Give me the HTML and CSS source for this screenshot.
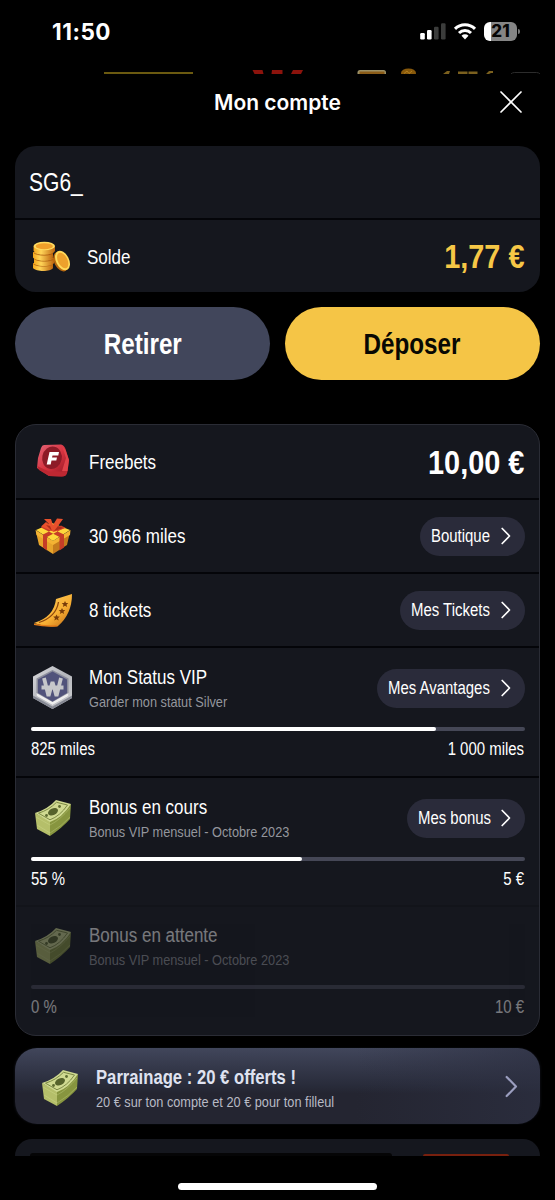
FILE: index.html
```html
<!DOCTYPE html>
<html lang="fr">
<head>
<meta charset="utf-8">
<title>Mon compte</title>
<link rel="stylesheet" href="styles.css">
</head>
<body>
<svg class="defs" width="0" height="0" aria-hidden="true">
  <defs>
    <linearGradient id="gold" x1="0" y1="0" x2="1" y2="0"><stop offset="0" stop-color="#f6a81c"/><stop offset=".35" stop-color="#ffd458"/><stop offset="1" stop-color="#bd650f"/></linearGradient>
    <linearGradient id="ticket" x1="0" y1="0" x2="1" y2="1"><stop offset="0" stop-color="#ffd567"/><stop offset=".6" stop-color="#f8b034"/><stop offset="1" stop-color="#bc6614"/></linearGradient>
    <linearGradient id="silver" x1="0" y1="0" x2="1" y2="1"><stop offset="0" stop-color="#d9d9dc"/><stop offset=".5" stop-color="#b4b6bc"/><stop offset="1" stop-color="#d0d0d3"/></linearGradient>
    <linearGradient id="red" x1="0" y1="0" x2="1" y2="1"><stop offset="0" stop-color="#e26678"/><stop offset=".5" stop-color="#d83340"/><stop offset="1" stop-color="#8d1420"/></linearGradient>
  </defs>
  <symbol id="cash" viewBox="0 0 36 36">
    <path d="M0 13 15 21 15 36 2 29Z" fill="#b5bf6a"/>
    <path d="M15 21Q24 17 36 4L35 19Q27 28 15 36Z" fill="#87953f"/>
    <path d="M0 13Q13 9 21 0L36 4Q27 18 15 22Z" fill="#d0da91"/>
    <path d="M3.5 13.2Q14 10 21.5 2.3L32.5 5Q25 16 15 19.8Z" fill="none" stroke="#7d8a45" stroke-width="1"/>
    <ellipse cx="18" cy="11.7" rx="5.3" ry="3.3" transform="rotate(-25 18 11.7)" fill="#56632b"/>
    <circle cx="24.5" cy="6.5" r="1.4" fill="#5f6d31"/><circle cx="11.5" cy="15.5" r="1.4" fill="#5f6d31"/>
    <path d="M1 17 15 25Q25 20 35 8M2 25 15 33Q27 26 35 17" fill="none" stroke="#e0e9a0" stroke-opacity=".35" stroke-width=".8"/>
  </symbol>
  <symbol id="chevron" viewBox="0 0 10 18"><path d="M1.2 1.5 8.5 9 1.2 16.5" fill="none" stroke="currentColor" stroke-width="1.700" stroke-linecap="round" stroke-linejoin="round"/></symbol>
</svg>

<header class="status">
  <span class="clock">11:50</span>
  <svg class="status-icons" width="68" height="22" viewBox="416 21 68 22">
    <g fill="#fff"><rect x="420.200" y="33" width="4.600" height="6.500" rx="1.200"/><rect x="427" y="30" width="4.600" height="9.500" rx="1.200"/></g>
    <g fill="#3b3c3b"><rect x="434" y="26.700" width="4.600" height="12.800" rx="1.200"/><rect x="441" y="23.300" width="4.600" height="16.200" rx="1.200"/></g>
    <g fill="none" stroke="#fff" stroke-width="3"><path d="M455 28.900a14 14 0 0 1 20 0M459 33a8.500 8.500 0 0 1 12 0"/></g>
    <path d="M461.500 35.800a5 5 0 0 1 7 0L465 39.500Z" fill="#fff"/>
  </svg>
  <span class="battery">21</span>
</header>

<svg class="peek" width="555" height="6" viewBox="0 68 555 6">
  <rect x="104" y="72" width="89" height="2" fill="#6b5a10"/>
  <g fill="#8c130c"><path d="M252.500 70h10l1 4h-9zM272 70h10.500v4h-11zM293 70h10l-2 4h-10z"/></g>
  <rect x="357.500" y="70" width="28.500" height="8" rx="2.500" fill="#9b9066"/><rect x="359.500" y="71.500" width="25" height="4" fill="#8b5c18"/>
  <ellipse cx="408.500" cy="73" rx="7.500" ry="4.600" fill="#88590b"/><path d="M404 73.500l3-2.500 2 2.500 3-2.500" fill="none" stroke="#c08a24" stroke-width=".8"/>
  <g fill="#7b601e"><path d="M443 74l4-3h3l-1 3zM458 71.500h9.500v2.500h-9.500zM468.500 71.500h9v2.500h-9zM486 74l3-3h4v2h-2l-2 1z"/></g>
  <rect x="509.500" y="72.500" width="32" height="12" rx="5" fill="none" stroke="#2c2c2c"/>
</svg>

<main class="sheet">
  <div class="title-bar">
    <h1>Mon compte</h1>
    <svg class="close" width="24" height="24" viewBox="0 0 24 24"><path d="M2 2 22 22M22 2 2 22" stroke="#fff" stroke-width="1.700" stroke-linecap="round"/></svg>
  </div>

  <section class="card wallet">
    <div class="row"><span class="user">SG6_</span></div>
    <div class="row">
      <svg class="icon" width="44" height="40" viewBox="30 237 44 40">
        <path d="M33 263v5c3 4 18 4 20 0v-5z" fill="url(#gold)"/>
        <path d="M33 263.500c3 3.500 18 3.500 20 0" fill="none" stroke="#a9580c" stroke-width=".8"/>
        <path d="M34 258v5c3 4 18 4 20 0v-5z" fill="url(#gold)"/>
        <path d="M34 258.500c3 3.500 18 3.500 20 0" fill="none" stroke="#a9580c" stroke-width=".8"/>
        <path d="M33 252v5.500c3 4 18 4 20 0v-5.500z" fill="url(#gold)"/>
        <path d="M33.500 252.500c3 3.500 18 3.500 20 0" fill="none" stroke="#a9580c" stroke-width=".8"/>
        <path d="M33.600 246v5c3 4.500 19 4.500 21.400 0v-5z" fill="url(#gold)"/>
        <ellipse cx="44.300" cy="246" rx="10.700" ry="4.300" fill="#ffdb60"/>
        <ellipse cx="44.300" cy="246.200" rx="8.600" ry="3" fill="#f0a02a"/>
        <ellipse cx="61" cy="261.500" rx="6.800" ry="10.500" transform="rotate(-27 61 261.500)" fill="#b8680f"/>
        <ellipse cx="62.500" cy="260.500" rx="6.500" ry="10.500" transform="rotate(-27 62.500 260.500)" fill="#ffd95a"/>
        <ellipse cx="62.700" cy="260.500" rx="4.700" ry="8.300" transform="rotate(-27 62.700 260.500)" fill="#eda12c"/>
      </svg>
      <span class="label">Solde</span>
      <span class="amount amount-gold">1,77 €</span>
    </div>
  </section>

  <div class="actions">
    <button class="btn btn-secondary"><span>Retirer</span></button>
    <button class="btn btn-primary"><span>Déposer</span></button>
  </div>

  <section class="card benefits">
    <div class="row">
      <svg class="icon" width="44" height="44" viewBox="31 440 44 44">
        <path d="M44 445 61 444.500Q64 445 65.500 449L69 460 67.500 472Q66 477 61 476.500L49 476 37 468 38 458 41 448Q42 445 44 445Z" fill="url(#red)"/>
        <path d="M37 466 49 471.500H62L67.500 468 67 473Q66 477 61 476.500L49 476 39 470Z" fill="#bd2832"/>
        <path d="M62 446 65.500 450 69 460 67.500 471 62 471 66 458Z" fill="#e0424a"/>
        <ellipse cx="52" cy="457.800" rx="9.800" ry="11.300" transform="rotate(12 52 457.800)" fill="#8d1b27"/>
        <path d="M49.500 452H59L58.300 455.500H52.500L52 457.500H57L56.300 460.500H51.500L50.700 464.500H46.700Z" fill="#fff"/>
      </svg>
      <span class="label">Freebets</span>
      <span class="amount">10,00 €</span>
    </div>
    <div class="row">
      <svg class="icon" width="44" height="44" viewBox="31 514 44 44">
        <path d="M36 532 53 541V554L39 545Z" fill="#e7a42b"/>
        <path d="M53 541 70 532 67 545 53 554Z" fill="#c57c1d"/>
        <path d="M36 530 52 523 70 530 53 541Z" fill="#ffd83c"/>
        <path d="M35.500 530 53 541V545L36.500 535ZM70.500 530 53 541V545L70 535Z" fill="#f4b333"/>
        <path d="M41 527.500 45 525.500 64 534.500V547.500L59.500 550.500V537ZM65 527.500 61 525.500 43 534.500V547.500L47 550.500V537Z" fill="#c63d27"/>
        <path d="M52 531 41 526.500 46 522 50 525 44 519 51 519 53 525 57 518.500 63 519 58 526 66 528 53.500 532Z" fill="#e9502c"/>
        <path d="M52 531 46 525 50 526ZM54 531 58 526 64 528Z" fill="#ae2d1b"/>
      </svg>
      <span class="label">30 966 miles</span>
      <a class="pill pill-shop"><span>Boutique</span><svg class="chev"><use href="#chevron"/></svg></a>
    </div>
    <div class="row">
      <svg class="icon" width="44" height="44" viewBox="31 588 44 44">
        <path d="M34 623Q54 617 56 599L72 594Q72 614 58 626Q46 627.500 34 623Z" fill="url(#ticket)"/>
        <path d="M34 623.500Q45 626 56 625L58 626.500Q45 627.500 34 625Z" fill="#e47c18"/>
        <path d="M39 622.500Q56 617 58.500 602" fill="none" stroke="#8e470c" stroke-width="1.300"/>
        <g fill="#783c0a"><path id="star" d="M65 601 66 603 68.300 603 66.500 604.700 67.200 607 65 605.800 62.800 607 63.500 604.700 61.700 603 64 603Z"/><use href="#star" x="-3" y="7"/><use href="#star" x="-8.500" y="13.500"/></g>
      </svg>
      <span class="label">8 tickets</span>
      <a class="pill pill-tickets"><span>Mes Tickets</span><svg class="chev"><use href="#chevron"/></svg></a>
    </div>
    <div class="row goal">
      <div class="goal-head">
        <svg class="icon" width="44" height="46" viewBox="31 665 44 46">
          <path d="M52.500 666 72 676.500V698L52.500 709 33 698V676.500Z" fill="url(#silver)"/>
          <path d="M33 695.500 52.500 706.500 72 695.500V698L52.500 709 33 698Z" fill="#858893"/>
          <path d="M52.500 670 68.500 678.500V696L52.500 705 36.500 696V678.500Z" fill="#8c8e9c"/>
          <path d="M36.500 693 52.500 702 68.500 693V696L52.500 705 36.500 696Z" fill="#eee"/>
          <path d="M52.500 671.500 67 679.500V693L52.500 701.500 38 693V679.500Z" fill="#51537b"/>
          <path d="M44 678 48.500 696 52.500 682 56.500 696 61 678M41.500 687.500H63.500" fill="none" stroke="#c6c7ca" stroke-width="3.800" stroke-linejoin="bevel"/>
        </svg>
        <div class="texts"><span class="label">Mon Status VIP</span><span class="sub">Garder mon statut Silver</span></div>
        <a class="pill pill-perks"><span>Mes Avantages</span><svg class="chev"><use href="#chevron"/></svg></a>
      </div>
      <div class="track"><div class="fill" style="width:82%"></div></div>
      <div class="ends"><span>825 miles</span><span>1 000 miles</span></div>
    </div>
    <div class="row goal bonus">
      <div class="goal-head">
        <svg class="icon cash"><use href="#cash"/></svg>
        <div class="texts"><span class="label">Bonus en cours</span><span class="sub">Bonus VIP mensuel - Octobre 2023</span></div>
        <a class="pill pill-bonus"><span>Mes bonus</span><svg class="chev"><use href="#chevron"/></svg></a>
      </div>
      <div class="track"><div class="fill" style="width:55%"></div></div>
      <div class="ends"><span>55 %</span><span>5 €</span></div>
    </div>
    <div class="row goal pending">
      <div class="goal-head">
        <svg class="icon cash"><use href="#cash"/></svg>
        <div class="texts"><span class="label">Bonus en attente</span><span class="sub">Bonus VIP mensuel - Octobre 2023</span></div>
      </div>
      <div class="track"></div>
      <div class="ends"><span>0 %</span><span>10 €</span></div>
    </div>
  </section>

  <section class="promo">
    <svg class="cash"><use href="#cash"/></svg>
    <div class="texts"><span class="promo-title">Parrainage : 20 € offerts !</span><span class="promo-sub">20 € sur ton compte et 20 € pour ton filleul</span></div>
    <svg class="promo-chev"><use href="#chevron"/></svg>
  </section>

  <section class="next"><div class="next-dark"></div><div class="next-red"></div></section>
</main>
<div class="home"></div>
</body>
</html>
```
FILE: styles.css
```css
* { box-sizing: border-box; }
body { margin: 0; width: 555px; height: 1200px; overflow: hidden; background: #000; color: #fff; font-family: "Liberation Sans", Arial, sans-serif; display: flex; flex-direction: column; }
.defs { position: absolute; }
svg { flex: none; display: block; }

.status { height: 68px; display: flex; align-items: flex-start; padding: 20px 38px 0 52px; flex: none; }
.clock { font: 700 22.5px/23px Inter, sans-serif; letter-spacing: .5px; }
.status-icons { margin: 1px 0 0 auto; }
.battery { width: 33px; height: 19px; margin-top: 2px; border-radius: 6px; background: linear-gradient(90deg, #fff 7px, #858585 7px); color: #050505; font: 800 17px/19px Inter, sans-serif; text-align: center; position: relative; }
.battery::after { content: ""; position: absolute; right: -3px; top: 7px; width: 2px; height: 5px; border-radius: 0 2px 2px 0; background: #777; }
.peek { flex: none; }

.sheet { display: flex; flex-direction: column; padding: 0 15px; flex: none; }
.title-bar { height: 72px; display: flex; align-items: flex-start; position: relative; justify-content: center; }
h1 { margin: 16px 0 0; font: 600 21px/26px Inter, sans-serif; }
.close { position: absolute; right: 17px; top: 16px; }

.card { background: #15171e; border-radius: 21px; overflow: hidden; flex: none; }
.row { display: flex; align-items: center; padding: 0 15px; border-bottom: 2px solid #040509; height: 74px; }
.row:last-child { border-bottom: 0; }
.icon { flex: none; margin-left: .5px; margin-right: 13.500px; }
.wallet .row:last-child { height: 72px; padding-top: 1px; }
.wallet .icon { margin: 0 13.500px 0 -.5px; }

/* Condensed lettering */
.user, .label, .sub, .promo-title, .promo-sub, .pill span, .ends span { transform: scaleX(.85); transform-origin: 0 50%; white-space: nowrap; }
.amount { transform: scaleX(.85); transform-origin: 100% 50%; white-space: nowrap; }
.btn span { display: inline-block; transform: scaleX(.835); }

.user { font-size: 25.5px; line-height: 30px; transform: scaleX(.825); margin-left: -1px; }
.label { font-size: 20px; line-height: 26px; }
.amount { margin-left: auto; font-size: 34px; font-weight: 700; line-height: 40px; }
.amount-gold { color: #f6c746; margin-top: -2px; }

.actions { display: flex; gap: 15px; margin-top: 15px; }
.btn { flex: 1; height: 73px; border: 0; border-radius: 37px; padding: 0; font: 700 29px/36px "Liberation Sans", Arial, sans-serif; }
.btn-secondary { background: #41465b; color: #fff; }
.btn-primary { background: #f5c546; color: #080803; }

.benefits { margin-top: 44px; height: 612px; border: 1px solid #2a2c35; }
.benefits .row { padding: 0 14.500px 0 14.500px; }
.benefits .row:first-child { height: 75px; }
.pill { margin-left: auto; height: 39px; border-radius: 20px; background: #2a2b3a; display: flex; align-items: center; padding: 0 14px 0 11px; font-size: 18px; white-space: nowrap; flex: none; }
.pill span { width: 0; transform: scaleX(.83); }
.pill-shop { width: 104.500px; }
.pill-tickets { width: 124.500px; }
.pill-perks { width: 147.500px; }
.pill-bonus { width: 117.500px; }
.chev { width: 10px; height: 18px; margin-left: auto; }
.benefits .row.goal { height: 130px; display: block; padding-top: 16px; }
.goal-head { display: flex; align-items: center; height: 48px; }
.texts { display: flex; flex-direction: column; }
.sub { font-size: 15px; line-height: 23px; color: #94969d; }
.goal .texts { width: 200px; }
.track { height: 3.500px; margin-top: 15.200px; border-radius: 2px; background: #454756; }
.fill { height: 3.500px; border-radius: 2px; background: #fff; }
.ends { display: flex; justify-content: space-between; margin-top: 7.300px; font-size: 18px; line-height: 22px; }
.ends span { transform: scaleX(.83); }
.ends span:last-child { transform-origin: 100% 50%; }
.icon.cash { width: 36px; height: 36px; margin-left: 4.500px; margin-right: 17.500px; }
.benefits .row.bonus { border-bottom-color: #12141a; height: 129px; }
.benefits .row.pending { opacity: .42; height: 127px; padding-top: 15px; }

.promo { height: 76px; margin-top: 12px; border-radius: 22px; background: linear-gradient(90deg, #2d304200 65%, #2d3042b0 100%), linear-gradient(180deg, #41465b 0, #292c3b 48%, #242531 60%, #242531 100%); display: flex; align-items: center; padding: 0 22px 0 27px; box-shadow: -1px 0 2px #2a2e4044, 1px 0 2px #2a2e4044; }
.promo .cash { width: 36px; height: 36px; margin-right: 18px; margin-top: 3px; }
.promo .texts { padding-top: 6px; }
.promo-title { font-size: 20px; font-weight: 700; line-height: 25px; color: #dfe2f0; transform: scaleX(.833); }
.promo-sub { font-size: 15px; line-height: 24px; color: #b8bac5; }
.promo-chev { width: 13px; height: 23px; color: #9b9ebf; margin-left: auto; margin-top: 1px; }

.next { margin-top: 15px; height: 17px; border-radius: 21px 21px 0 0; background: #15171e; overflow: hidden; display: flex; justify-content: space-between; align-items: flex-end; padding: 0 31px 0 15px; }
.next-dark { width: 362px; height: 3px; background: #050506; border-radius: 4px 4px 0 0; }
.next-red { width: 86px; height: 2px; background: #78200e; border-radius: 40px 40px 0 0; }
.home { width: 199px; height: 7px; margin: 27px auto 0; border-radius: 4px; background: #fff; flex: none; }
```
